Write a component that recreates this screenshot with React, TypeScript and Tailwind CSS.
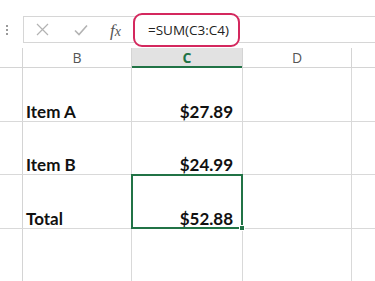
import React from 'react';

const rows = [
  { label: 'Item A', value: '$27.89', h: 'h-[54px]' },
  { label: 'Item B', value: '$24.99', h: 'h-[53px]' },
  { label: 'Total', value: '$52.88', h: 'h-[54px]', selected: true },
];

export default function App() {
  return (
    <div className="w-[375px] h-[281px] overflow-hidden bg-white font-['Open_Sans',sans-serif]">
      {/* formula bar */}
      <div className="h-[48px] flex items-start relative">
        <div className="w-[23px] mt-[25px] flex flex-col items-start gap-[2px] pl-[6px]">
          <span className="w-[2px] h-[2px] bg-[#9a9a9a]" />
          <span className="w-[2px] h-[2px] bg-[#9a9a9a]" />
          <span className="w-[2px] h-[2px] bg-[#9a9a9a]" />
        </div>
        <div className="flex-1 h-[27px] mt-[16px] border border-r-0 border-[#d6d6d6] flex items-center">
          <div className="w-[110px] flex items-center h-full">
            <svg className="ml-[12px]" width="13" height="13" viewBox="0 0 13 13">
              <path d="M1 1 L12 12 M12 1 L1 12" stroke="#b3b3b3" strokeWidth="1.2" fill="none" />
            </svg>
            <svg className="ml-[25px]" width="14" height="12" viewBox="0 0 14 12">
              <path d="M1 6.5 L5 10.5 L13 1.5" stroke="#b3b3b3" strokeWidth="1.6" fill="none" />
            </svg>
            <span className="ml-[22px] mt-[2px] leading-none font-['Liberation_Serif',serif] italic text-[17px] text-[#555]">
              f<span className="text-[14px]">x</span>
            </span>
          </div>
        </div>
        <div className="absolute left-[133px] top-[13px] w-[107px] h-[34px] border-2 border-[#d4285e] rounded-[9px] bg-white flex items-center pl-[13px]">
          <span className="text-[13.5px] text-[#222]">=SUM(C3:C4)</span>
        </div>
      </div>

      {/* column headers */}
      <div className="flex h-[20px] border-b border-[#d4d4d4]">
        <div className="w-[23px] border-r border-[#d4d4d4]" />
        <div className="w-[109px] border-r border-[#d4d4d4] flex items-center justify-center text-[14px] text-[#555]">B</div>
        <div className="w-[110px] bg-[#e2e2e2] border-b-2 border-[#217346] -mb-[1px] flex items-center justify-center text-[14px] font-bold text-[#217346]">C</div>
        <div className="w-[110px] border-l border-r border-[#d4d4d4] flex items-center justify-center text-[14px] text-[#555]">D</div>
        <div className="flex-1" />
      </div>

      {/* rows */}
      {rows.map((r) => (
        <div key={r.label} className={`flex ${r.h} border-b border-[#d9d9d9]`}>
          <div className="w-[23px] border-r border-[#d4d4d4]" />
          <div className="w-[109px] border-r border-[#d9d9d9] flex items-end pl-[3px] pb-[1px] leading-none font-['Lato',sans-serif] font-bold text-[17px] text-[#111]">
            {r.label}
          </div>
          <div
            className={`relative w-[110px] flex items-end justify-end pr-[9px] pb-[1px] leading-none font-['Lato',sans-serif] font-bold text-[17px] text-[#111] ${
              r.selected ? 'outline-2 outline-[#217346] -outline-offset-1 z-10' : ''
            }`}
          >
            {r.value}
            {r.selected && <span className="absolute -right-[3px] -bottom-[3px] w-[6px] h-[6px] bg-[#217346] border border-white" />}
          </div>
          <div className="w-[110px] border-l border-r border-[#d9d9d9]" />
          <div className="flex-1" />
        </div>
      ))}
      <div className="flex h-[60px]">
        <div className="w-[23px] border-r border-[#d4d4d4]" />
        <div className="w-[109px] border-r border-[#d9d9d9]" />
        <div className="w-[110px]" />
        <div className="w-[110px] border-l border-r border-[#d9d9d9]" />
      </div>
    </div>
  );
}
